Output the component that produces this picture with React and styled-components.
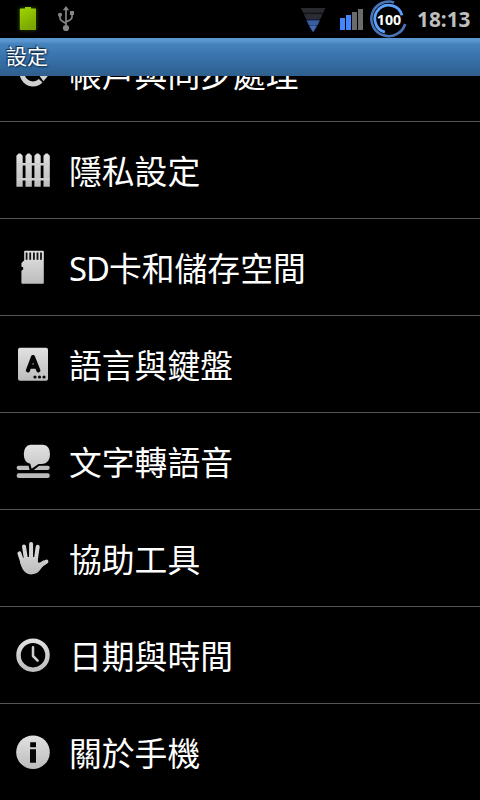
import React from "react";
import styled, { createGlobalStyle } from "styled-components";

const GlobalStyle = createGlobalStyle`
  * { box-sizing: border-box; }
  html, body { margin: 0; padding: 0; background: #000; overflow: hidden; }
`;

const Screen = styled.main`
  width: 480px;
  height: 800px;
  display: flex;
  flex-direction: column;
  background: #000;
  color: #fff;
  overflow: hidden;
  font-family: "Noto Sans", "Noto Sans CJK TC", sans-serif;
`;

const StatusBar = styled.header`
  flex: none;
  height: 38px;
  display: flex;
  justify-content: space-between;
  padding: 0 9px 0 12px;
`;

const StatusGroup = styled.div`
  display: flex;
  align-items: center;
`;

const StatusIcon = styled.svg`
  display: block;
  flex: none;
  width: ${(p) => p.$w}px;
  height: 38px;
  margin-right: ${(p) => p.$gap || 0}px;
`;

const Clock = styled.time`
  width: 54px;
  font: 700 20.8px/38px "Noto Sans", sans-serif;
  color: #bebebe;
  white-space: nowrap;
`;

const TitleBar = styled.h1`
  flex: none;
  height: 38px;
  margin: 0;
  padding: 0 6px;
  font-size: 21px;
  font-weight: 400;
  line-height: 36px;
  text-shadow: -1px -1px 1px #0b2a48, 1px 1px 2px #0b2a48;
  background: linear-gradient(#5b96d0 0, #5b96d0 3px, #4583bd 6px, #3a73ad 18px, #306598 32px, #305f8c 38px);
`;

const List = styled.ul`
  flex: 1;
  min-height: 0;
  margin: 0;
  padding: 0;
  list-style: none;
  display: flex;
  flex-direction: column;
  justify-content: flex-start;
  overflow: hidden;
`;

const Row = styled.li`
  flex: none;
  height: 97px;
  display: flex;
  align-items: center;
  gap: 12px;
  padding-left: 9px;
  border-bottom: 1px solid #555;
  &:first-child { margin-top: -51px; }
`;

const RowIcon = styled.svg`
  display: block;
  flex: none;
  width: 48px;
  height: 48px;
`;

const Label = styled.span`
  padding-top: 3px;
  font-size: 32.8px;
  line-height: 48px;
  white-space: nowrap;
`;

const Latin = styled.span`
  letter-spacing: -1px;
`;

const G = "url(#silver)";

const SyncIcon = () => (
  <RowIcon viewBox="0 0 48 48">
    <path d="M31.7 16.3A10.9 10.9 0 1 0 31.7 31.7" fill="none" stroke="#d0d0d0" strokeWidth="5" />
    <path d="M29.5 25.5H39.5L38.3 27.8L34.4 32.2Z" fill="#d0d0d0" />
  </RowIcon>
);

const PICKETS = [7.4, 16.5, 25.4, 34.5];
const FenceIcon = () => (
  <RowIcon viewBox="0 0 48 48">
    <g fill={G}>
      {PICKETS.map((x) => (
        <path key={x} d={`M${x} 40.8V9.8L${x + 2.2} 7.6H${x + 4.1}L${x + 6.3} 9.8V40.8Z`} />
      ))}
    </g>
    <path d="M8 18.2H40.5M8 33.2H40.5" stroke="#cfcfcf" strokeWidth="2.4" />
  </RowIcon>
);

const SLOTS = [16.7, 20.3, 24, 27.6, 31.1];
const CardIcon = () => (
  <RowIcon viewBox="0 0 48 48">
    <path fill={G} d="M16 7.7H34Q34.8 7.7 34.8 8.5V40Q34.8 40.8 34 40.8H13.2Q12.4 40.8 12.4 40V28L14.2 26.3V24.6L12.4 23.4V20.3L15.2 17.3V8.5Q15.2 7.7 16 7.7Z" />
    {SLOTS.map((x) => <rect key={x} x={x} y="9.5" width="1.8" height="7.3" fill="#111" />)}
  </RowIcon>
);

const KeyboardIcon = () => (
  <RowIcon viewBox="0 0 48 48">
    <rect x="9" y="7.7" width="30" height="33" rx="2" fill={G} />
    <path d="M18.9 30.4L24 17L29.4 30.4M21 26.6H27.2" fill="none" stroke="#050505" strokeWidth="4.1" strokeLinecap="round" strokeLinejoin="round" />
    {[26, 30.5, 35].map((x) => <circle key={x} cx={x} cy="37" r="1.6" fill="#080808" />)}
  </RowIcon>
);

const SpeechIcon = () => (
  <RowIcon viewBox="0 0 48 48">
    <rect x="7.7" y="28.8" width="33" height="4.1" rx="1.8" fill="#bdbdbd" />
    <rect x="7.7" y="36.3" width="33" height="4.6" rx="2" fill="#bababa" />
    <path d="M21 26.2L22.5 32.3L29.5 26.7" fill={G} stroke="#000" strokeWidth="4" />
    <path fill={G} d="M21.5 7.7H34Q41 8.3 41 17.2Q41 26.3 33 27H29.5L22.6 31.7L21.3 26.7Q14.8 25.5 14.8 17Q15 8.4 21.5 7.7Z" />
  </RowIcon>
);

const HandIcon = () => (
  <RowIcon viewBox="0 0 48 48">
    <path d="M10.4 19.3L14 30M15 12.5L17.4 28M22.1 10L22 28M28.7 12.8L26.5 28M37.4 27.6L29 33" stroke="#d5d5d5" strokeWidth="4" strokeLinecap="round" fill="none" />
    <path fill={G} d="M12 25.5L15.5 23L28.4 23L28.8 28Q30 30 34.7 26.2L38.6 28.8Q34 31.5 31.4 35.5Q28 40.4 22 40.4Q16.5 40.3 13.6 35Q12 32 11 28Z" />
  </RowIcon>
);

const ClockIcon = () => (
  <RowIcon viewBox="0 0 48 48">
    <circle cx="24" cy="24.2" r="14.5" fill="none" stroke={G} strokeWidth="4.5" />
    <path d="M24 16.3V25L28.6 29.6" fill="none" stroke="#cfcfcf" strokeWidth="2.5" strokeLinecap="round" strokeLinejoin="round" />
  </RowIcon>
);

const InfoIcon = () => (
  <RowIcon viewBox="0 0 48 48">
    <circle cx="24" cy="24.2" r="16.8" fill={G} />
    <path fill="#050505" d="M21.2 14.2H27V19.3H21.2ZM21 21.3H27V34.8H21Z" />
  </RowIcon>
);

const ITEMS = [
  ["帳戶與同步處理", SyncIcon],
  ["隱私設定", FenceIcon],
  [<><Latin>SD</Latin>卡和儲存空間</>, CardIcon],
  ["語言與鍵盤", KeyboardIcon],
  ["文字轉語音", SpeechIcon],
  ["協助工具", HandIcon],
  ["日期與時間", ClockIcon],
  ["關於手機", InfoIcon],
];

const BatteryIcon = () => (
  <StatusIcon $w={32} $gap={10} viewBox="0 0 32 38">
    <rect x="6.5" y="7" width="19" height="24" rx="3" fill="#3b5d00" opacity=".5" filter="url(#glow)" />
    <path fill="url(#charge)" d="M13 7H19V8.6H23.2Q24 8.6 24 9.4V29.2Q24 30 23.2 30H8.6Q7.8 30 7.8 29.2V9.4Q7.8 8.6 8.6 8.6H13Z" />
  </StatusIcon>
);

const UsbIcon = () => (
  <StatusIcon $w={24} viewBox="0 0 24 38">
    <g fill="none" stroke="#858585" strokeWidth="1.7">
      <path d="M12 9V27M6 15V18Q6 20 8 21L12 23.5M18 14V17Q18 19 16 20L12 22" />
    </g>
    <path fill="#858585" d="M12 6L15.2 10.3H8.8ZM16 11H20V15H16Z" />
    <circle cx="6" cy="14.8" r="2.1" fill="#858585" />
    <circle cx="12" cy="28" r="3.1" fill="#858585" />
  </StatusIcon>
);

const WifiIcon = () => (
  <StatusIcon $w={28} $gap={13} viewBox="0 0 28 38">
    <path d="M8 20H20L14 32Z" fill="#1e4bb0" opacity=".6" filter="url(#glow)" />
    <path d="M1.7 8H26.5L24.3 12.8H4.2Z" fill="#292a2f" />
    <path d="M4.6 13.5H23.9L21.4 18.9H7Z" fill="#2c2d34" />
    <path d="M7.4 19.8H20.9L18.7 24.9H9.8Z" fill="#3b5c9f" />
    <path d="M10 25.6H18.2L14.1 32.2Z" fill="#4568ae" />
    <path d="M5.4 14H23M8 20.3H20.2" stroke="#15171f" strokeWidth=".8" opacity=".6" />
  </StatusIcon>
);

const SignalIcon = () => (
  <StatusIcon $w={24} $gap={5} viewBox="0 0 24 38">
    <path fill="#4285ff" d="M0 18H5V30H0ZM6 15H11V30H6Z" />
    <path fill="#6b6b6b" d="M12 12H17V30H12ZM18 9H23V30H18Z" />
  </StatusIcon>
);

const PercentText = styled.text`
  font: 700 14.2px "Noto Sans", sans-serif;
  fill: #fff;
  stroke: #000;
  stroke-width: 2px;
  paint-order: stroke;
  text-anchor: middle;
`;

const PercentIcon = () => (
  <StatusIcon $w={40} $gap={8} viewBox="0 0 40 38">
    <path d="M25 2.4A17.3 17.3 0 1 0 36.2 24" fill="none" stroke="#4a74b8" strokeWidth="2.6" />
    <path d="M15.9 32.2A13.8 13.8 0 1 1 33 15.3" fill="none" stroke="#5da0fb" strokeWidth="2.8" />
    <PercentText x="20" y="25.2">100</PercentText>
  </StatusIcon>
);

const Defs = styled.svg`
  display: block;
  width: 0;
  height: 0;
`;

export default function App() {
  return (
    <>
      <GlobalStyle />
      <Defs aria-hidden="true">
        <defs>
          <linearGradient id="silver" gradientUnits="userSpaceOnUse" x1="0" y1="7" x2="0" y2="41">
            <stop offset="0" stopColor="#e2e2e2" />
            <stop offset="1" stopColor="#bcbcbc" />
          </linearGradient>
          <linearGradient id="charge" x1="0" y1="0" x2=".4" y2="1">
            <stop offset="0" stopColor="#9fd800" />
            <stop offset="1" stopColor="#7ba600" />
          </linearGradient>
          <filter id="glow" x="-50%" y="-50%" width="200%" height="200%">
            <feGaussianBlur stdDeviation="1.5" />
          </filter>
        </defs>
      </Defs>
      <Screen>
        <StatusBar>
          <StatusGroup>
            <BatteryIcon />
            <UsbIcon />
          </StatusGroup>
          <StatusGroup>
            <WifiIcon />
            <SignalIcon />
            <PercentIcon />
            <Clock>18:13</Clock>
          </StatusGroup>
        </StatusBar>
        <TitleBar>設定</TitleBar>
        <List>
          {ITEMS.map(([label, Icon], i) => (
            <Row key={i}>
              <Icon />
              <Label>{label}</Label>
            </Row>
          ))}
        </List>
      </Screen>
    </>
  );
}
